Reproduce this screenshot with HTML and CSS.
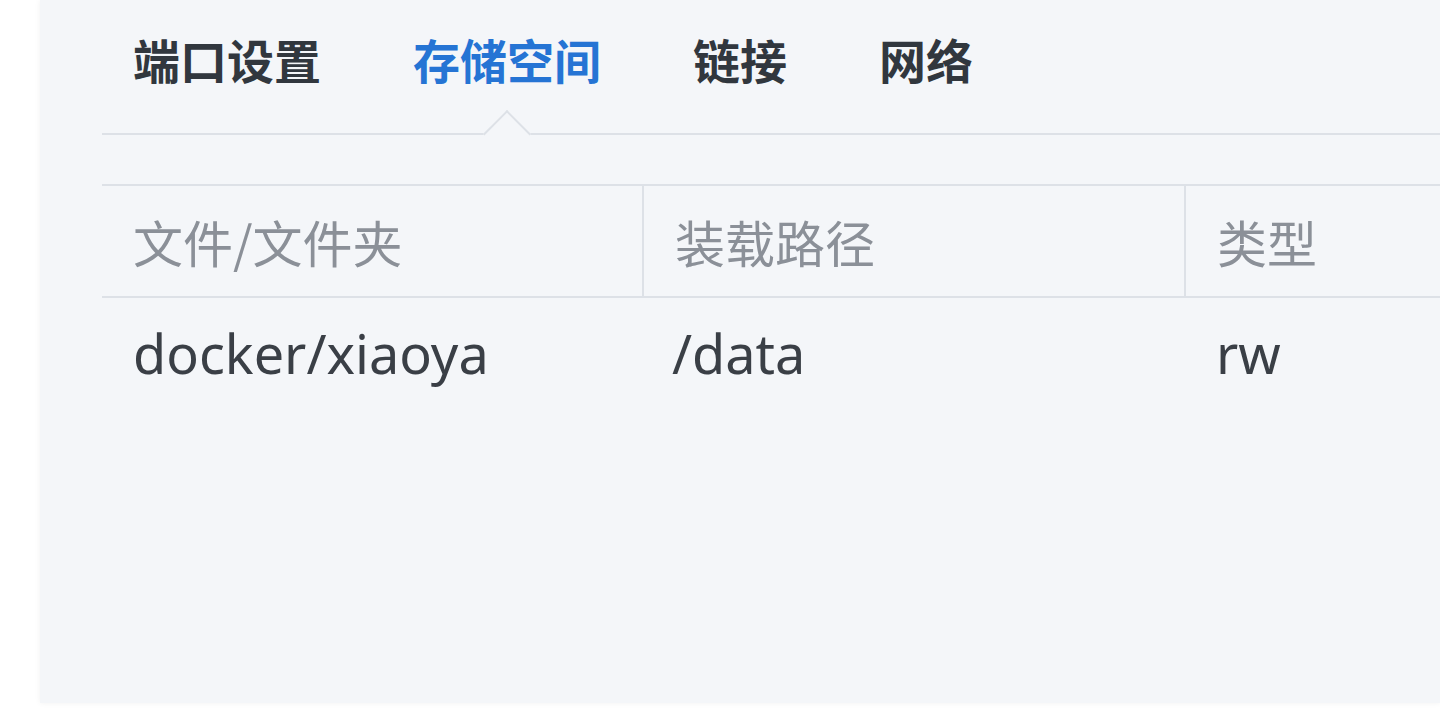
FILE: index.html
```html
<!DOCTYPE html>
<html lang="zh-CN">
<head>
<meta charset="utf-8">
<title>存储空间</title>
<link rel="stylesheet" href="styles.css">
</head>
<body>
<div class="panel">
  <div class="tabs">
    <div class="tab">端口设置</div>
    <div class="tab active">存储空间</div>
    <div class="tab">链接</div>
    <div class="tab">网络</div>
  </div>
  <div class="table">
    <div class="row head">
      <div class="cell c1">文件/文件夹</div>
      <div class="cell c2">装载路径</div>
      <div class="cell c3">类型</div>
    </div>
    <div class="row data">
      <div class="cell c1">docker/xiaoya</div>
      <div class="cell c2">/data</div>
      <div class="cell c3">rw</div>
    </div>
  </div>
</div>
</body>
</html>
```
FILE: styles.css
```css
html, body {
  margin: 0;
  padding: 0;
  background: #ffffff;
  overflow: hidden;
}
body {
  font-family: "Noto Sans", "Noto Sans CJK SC", sans-serif;
  height: 716px;
}
.panel {
  margin-left: 40px;
  height: 703px;
  background: #f4f6f9;
  box-shadow: 0 0 6px rgba(0, 0, 0, 0.06);
  padding-left: 62px;
  box-sizing: border-box;
}
.tabs {
  display: flex;
  gap: 92px;
  height: 135px;
  padding-left: 31px;
  border-bottom: 2px solid #dde1e7;
  box-sizing: border-box;
}
.tab {
  position: relative;
  font-family: "Noto Sans CJK SC", sans-serif;
  font-size: 47px;
  font-weight: 700;
  line-height: 117px;
  color: #31373e;
  height: 133px;
}
.tab.active {
  color: #2574d4;
}
.tab.active::after {
  content: "";
  position: absolute;
  left: 50%;
  top: 117px;
  width: 34px;
  height: 34px;
  margin-left: -17px;
  background: #f4f6f9;
  border-top: 2px solid #dde1e7;
  border-left: 2px solid #dde1e7;
  box-sizing: border-box;
  transform: rotate(45deg);
}
.table {
  margin-top: 49px;
  border-top: 2px solid #dde1e7;
}
.row {
  display: flex;
}
.cell {
  box-sizing: border-box;
  padding-left: 31px;
}
.c1 { width: 540px; }
.c2 { width: 542px; }
.c3 { flex: 1; }
.head {
  height: 112px;
  box-sizing: border-box;
  border-bottom: 2px solid #dde1e7;
}
.head .cell {
  font-family: "Noto Sans CJK SC", sans-serif;
  font-size: 50px;
  line-height: 110px;
  color: #8b9098;
}
.head .c2, .head .c3 {
  border-left: 2px solid #dde1e7;
}
.data .cell {
  font-size: 54px;
  line-height: 111px;
  color: #3a3f46;
}
.data .c2 { padding-left: 30px; }
.data .c3 { padding-left: 32px; }
```
